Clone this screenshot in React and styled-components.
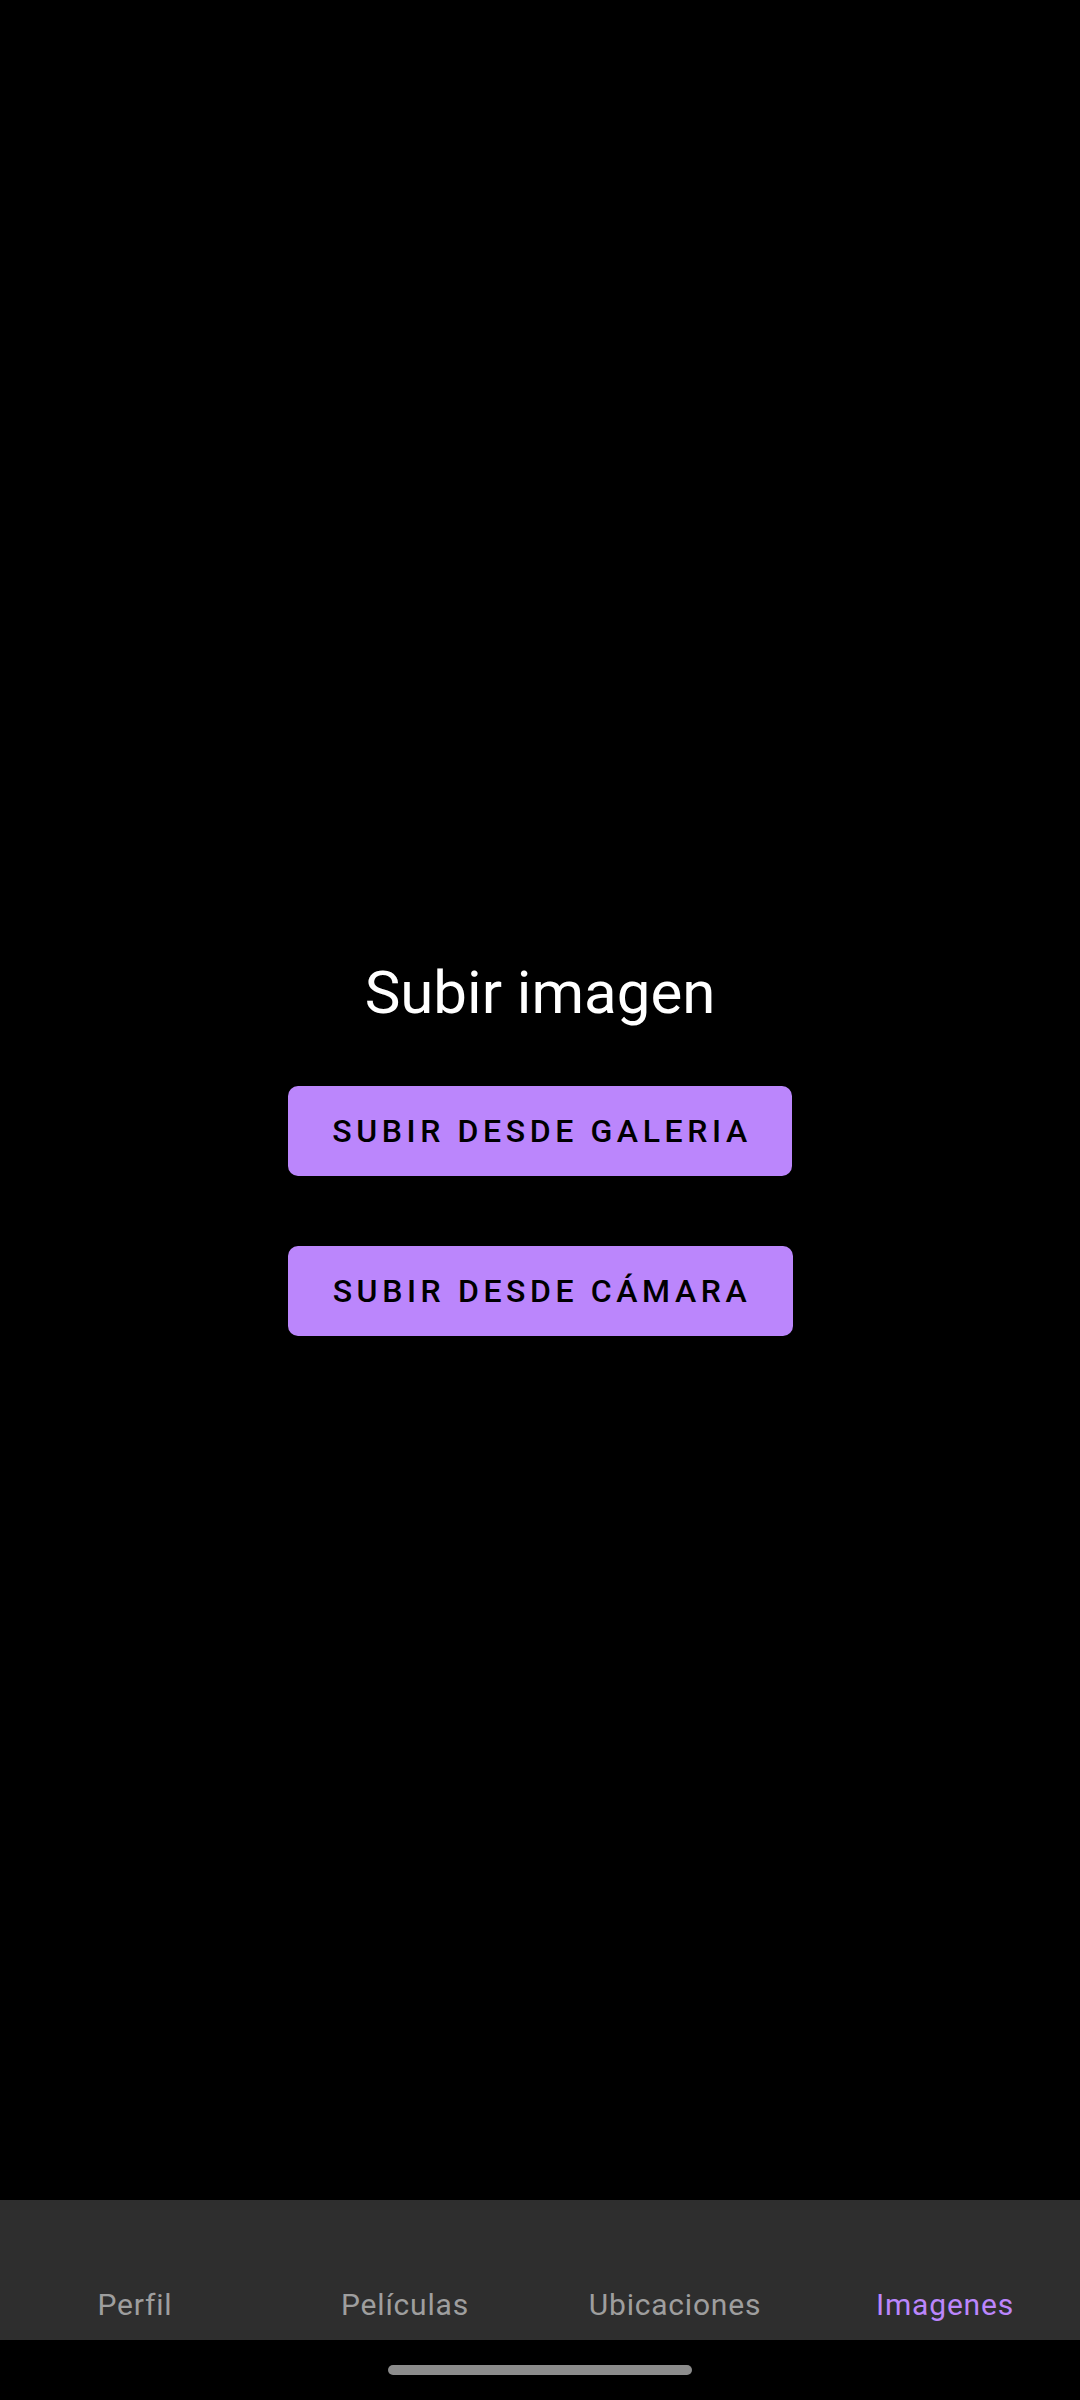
import React from 'react';
import styled, { createGlobalStyle } from 'styled-components';

const GlobalStyle = createGlobalStyle`
    html, body {
        margin: 0;
        padding: 0;
        background-color: #000000;
    }
    body {
        font-family: Roboto, "Noto Sans", sans-serif;
    }
`;

const Screen = styled.div`
    width: 1080px;
    height: 2400px;
    background-color: #000000;
    display: flex;
    flex-direction: column;
    overflow: hidden;
`;

const Content = styled.main`
    height: 2200px;
    box-sizing: border-box;
    padding-top: 957px;
    display: flex;
    flex-direction: column;
    align-items: center;
`;

const Title = styled.h1`
    margin: 0 0 57px 0;
    font-family: Roboto, sans-serif;
    font-weight: 400;
    font-size: 60px;
    line-height: 72px;
    color: #ffffff;
`;

const UploadButton = styled.button`
    width: ${p => p.width}px;
    height: 90px;
    margin-bottom: 70px;
    border: none;
    border-radius: 10px;
    background-color: #bb86fc;
    color: #000000;
    font-family: Roboto, sans-serif;
    font-weight: 500;
    font-size: 32px;
    letter-spacing: 4.6px;
    text-transform: uppercase;
    display: flex;
    align-items: center;
    justify-content: center;
    padding: 0 0 0 4px;
    cursor: pointer;
`;

const BottomNav = styled.nav`
    height: 140px;
    background-color: #2e2e2e;
    display: grid;
    grid-template-columns: repeat(4, 1fr);
`;

const NavItem = styled.div`
    display: flex;
    align-items: flex-end;
    justify-content: center;
    padding-bottom: 17px;
    font-family: Roboto, sans-serif;
    font-size: 30px;
    line-height: 36px;
    letter-spacing: 0.8px;
    color: ${p => (p.active ? '#bb86fc' : '#9e9e9e')};
`;

const GestureArea = styled.div`
    height: 60px;
    display: flex;
    justify-content: center;
    padding-top: 25px;
    box-sizing: border-box;
`;

const HomeIndicator = styled.div`
    width: 304px;
    height: 10px;
    border-radius: 5px;
    background-color: #8c8c8c;
`;

const tabs = ['Perfil', 'Películas', 'Ubicaciones', 'Imagenes'];

export default function App() {
    return (
        <>
            <GlobalStyle />
            <Screen>
                <Content>
                    <Title>Subir imagen</Title>
                    <UploadButton width={504}>Subir desde galeria</UploadButton>
                    <UploadButton width={505}>Subir desde cámara</UploadButton>
                </Content>
                <BottomNav>
                    {tabs.map(t => (
                        <NavItem key={t} active={t === 'Imagenes'}>{t}</NavItem>
                    ))}
                </BottomNav>
                <GestureArea>
                    <HomeIndicator />
                </GestureArea>
            </Screen>
        </>
    );
}
